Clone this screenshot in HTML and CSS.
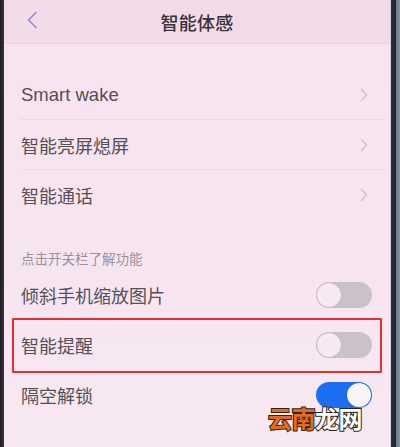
FILE: index.html
```html
<!DOCTYPE html>
<html lang="zh">
<head>
<meta charset="utf-8">
<link rel="stylesheet" href="styles.css">
</head>
<body>
<div class="phone">
  <div class="edge-left"></div>
  <div class="screen">
    <header class="topbar">
      <svg class="back" width="12" height="18" viewBox="0 0 12 18"><path d="M10 1.5 L2.5 9 L10 16.5" fill="none" stroke="#8d8cd6" stroke-width="1.6" stroke-linecap="round" stroke-linejoin="round"/></svg>
      <h1 class="title">智能体感</h1>
    </header>
    <section class="group first">
      <div class="row line"><span class="label latin">Smart wake</span><svg class="chev" width="8" height="14" viewBox="0 0 8 14"><path d="M1.5 1.5 L6.5 7 L1.5 12.5" fill="none" stroke="#cdc2ca" stroke-width="1.5" stroke-linecap="round"/></svg></div>
      <div class="row line"><span class="label">智能亮屏熄屏</span><svg class="chev" width="8" height="14" viewBox="0 0 8 14"><path d="M1.5 1.5 L6.5 7 L1.5 12.5" fill="none" stroke="#cdc2ca" stroke-width="1.5" stroke-linecap="round"/></svg></div>
      <div class="row"><span class="label">智能通话</span><svg class="chev" width="8" height="14" viewBox="0 0 8 14"><path d="M1.5 1.5 L6.5 7 L1.5 12.5" fill="none" stroke="#cdc2ca" stroke-width="1.5" stroke-linecap="round"/></svg></div>
    </section>
    <div class="hint">点击开关栏了解功能</div>
    <section class="group">
      <div class="row"><span class="label">倾斜手机缩放图片</span><span class="switch"><span class="knob"></span></span></div>
      <div class="row marked"><span class="label">智能提醒</span><span class="switch"><span class="knob"></span></span></div>
      <div class="row"><span class="label">隔空解锁</span><span class="switch on"><span class="knob"></span></span></div>
    </section>
    <div class="watermark"><span class="wm-orange">云南</span><span class="wm-white">龙网</span></div>
  </div>
  <div class="edge-right"></div>
</div>
</body>
</html>
```
FILE: styles.css
```css
* { box-sizing: border-box; }
html, body { margin: 0; padding: 0; }
body {
  width: 400px;
  height: 447px;
  overflow: hidden;
  font-family: "Noto Sans CJK SC", "Liberation Sans", sans-serif;
  background: #f6e4f0;
}
.phone {
  display: flex;
  width: 400px;
  height: 447px;
}
.edge-left {
  width: 4px;
  background: linear-gradient(to right, #1c1c22, #3a3540);
}
.edge-right {
  width: 10px;
  background: linear-gradient(to right, #d9c9d6 0, #d9c9d6 1px, #2b3142 1px, #1d2332 6px, #6e7888 6px, #8a93a1 10px);
}
.screen {
  flex: 1;
  position: relative;
  background: linear-gradient(to bottom, #f6e3ef 0%, #f6e5f0 60%, #f7e8f2 100%);
}
.topbar {
  height: 44px;
  display: flex;
  align-items: center;
  justify-content: center;
  position: relative;
  background: #f1dbe8;
  border-bottom: 1px solid #e8d4e1;
}
.back {
  position: absolute;
  left: 22px;
  top: 11px;
}
.title {
  margin: 0;
  font-size: 18px;
  font-weight: 500;
  color: #383338;
  letter-spacing: 0.2px;
  padding-left: 0;
}
.group.first { margin-top: 26px; }
.row {
  height: 50px;
  display: flex;
  align-items: center;
  justify-content: space-between;
  padding: 0 22px 0 17px;
  position: relative;
}
.row.line::after {
  content: "";
  position: absolute;
  left: 17px;
  right: 4px;
  bottom: 0;
  height: 1px;
  background: #ead8e4;
}
.label {
  font-size: 18px;
  color: #555055;
}
.label.latin {
  font-family: "Liberation Sans", "Noto Sans CJK SC", sans-serif;
  font-size: 18.5px;
}
.hint {
  height: 50px;
  padding: 29px 0 0 17px;
  font-size: 13.5px;
  color: #9a9198;
  line-height: 18px;
}
.switch {
  width: 56px;
  height: 26px;
  border-radius: 13px;
  background: #cbc1c8;
  position: relative;
  margin-right: -4px;
}
.knob {
  position: absolute;
  left: 1px;
  top: 1px;
  width: 24px;
  height: 24px;
  border-radius: 50%;
  background: #f7e9f2;
  box-shadow: 0 0 1px rgba(0,0,0,0.25);
}
.switch.on { background: #1d6ff2; }
.switch.on .knob {
  left: auto;
  right: 1px;
  background: #f8f4f8;
}
.row.marked::before {
  content: "";
  position: absolute;
  left: 8px;
  right: 8px;
  top: -2px;
  bottom: -3px;
  border: 2px solid #e5302b;
  border-radius: 1px;
}
.watermark {
  position: absolute;
  left: 264px;
  top: 403px;
  font-size: 24px;
  font-weight: 700;
  line-height: 30px;
  letter-spacing: -0.5px;
  -webkit-text-stroke: 2px #2a2320;
  paint-order: stroke fill;
}
.wm-orange { color: #e86a1c; }
.wm-white { color: #ffffff; }
```
